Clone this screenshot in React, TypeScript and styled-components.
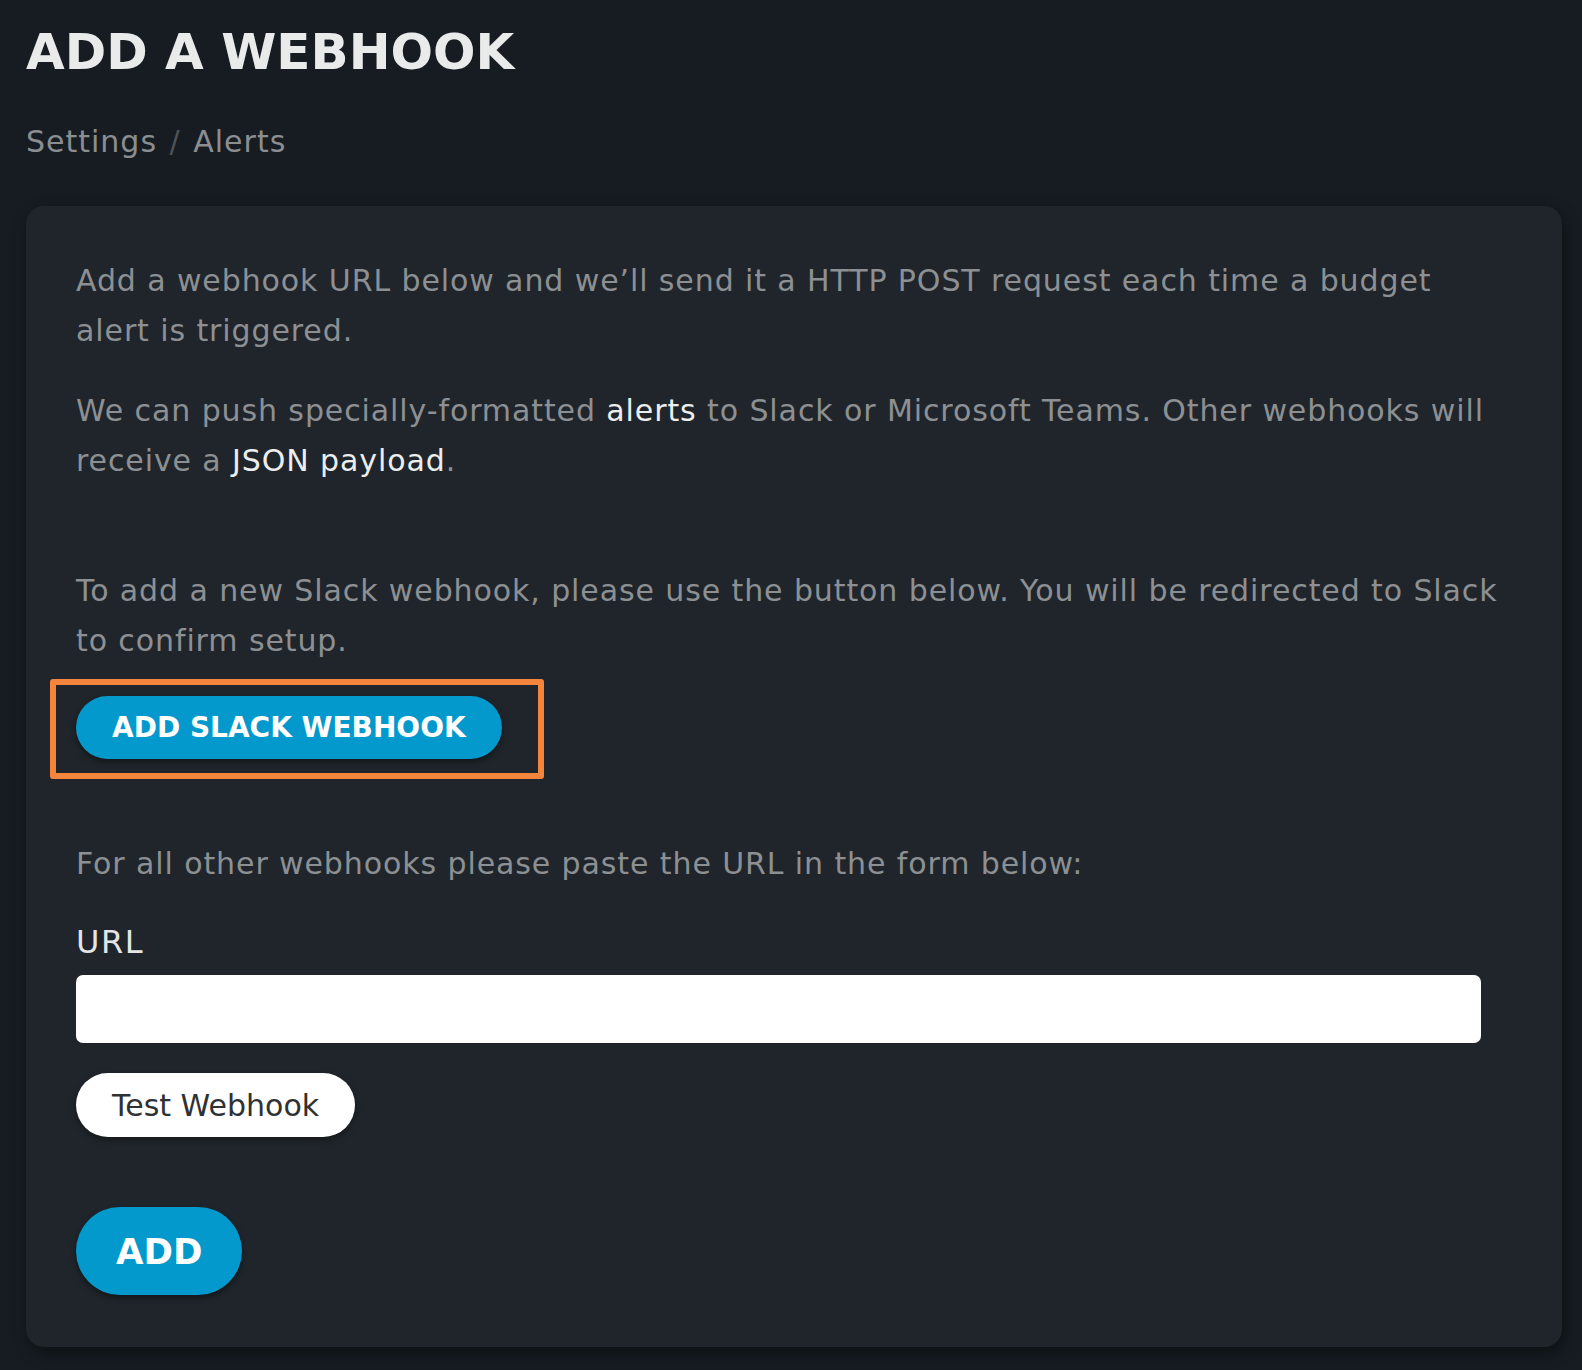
import React from "react";
import styled, { createGlobalStyle } from "styled-components";

const GlobalStyle = createGlobalStyle`
  html, body {
    margin: 0;
    padding: 0;
    background: #161c22;
  }
  body {
    font-family: "DejaVu Sans", "Liberation Sans", sans-serif;
    -webkit-font-smoothing: antialiased;
  }
  * { box-sizing: border-box; }
`;

const Page = styled.div`
  padding: 16px 20px 24px 26px;
  min-height: 1370px;
  background: #161c22;
`;

const Title = styled.h1`
  margin: 0;
  font-size: 50px;
  line-height: 72px;
  font-weight: 700;
  color: #e9ebea;
  letter-spacing: 0;
`;

const Breadcrumb = styled.nav`
  margin-top: 34px;
  font-size: 30px;
  line-height: 40px;
  color: #8b8e91;
  letter-spacing: 1px;
`;

const Separator = styled.span`
  color: #4e5358;
  margin: 0 2px;
`;

const Card = styled.section`
  margin-top: 44px;
  background: #1f252b;
  border-radius: 18px;
  padding: 50px 50px 52px;
  box-shadow: 3px 6px 16px rgba(0, 0, 0, 0.4);
`;

const Paragraph = styled.p<{ $gap?: number }>`
  margin: ${(p) => p.$gap ?? 30}px 0 0;
  max-width: 1424px;
  &:first-child { margin-top: 0; }
  font-size: 30px;
  line-height: 50px;
  color: #8d9093;
  letter-spacing: 0.9px;
`;

const Emph = styled.span`
  color: #eceeee;
`;

const Annotated = styled.div`
  position: relative;
  display: inline-block;
  margin-top: 30px;
  &::after {
    content: "";
    position: absolute;
    top: -17px;
    left: -26px;
    right: -42px;
    bottom: -20px;
    border: 6px solid #f5843c;
    border-radius: 3px;
    pointer-events: none;
  }
`;

const PrimaryButton = styled.button<{ $big?: boolean }>`
  display: block;
  border: none;
  cursor: pointer;
  background: #0399cc;
  color: #ffffff;
  font-family: inherit;
  font-weight: 700;
  text-transform: uppercase;
  font-size: ${(p) => (p.$big ? 35.5 : 28)}px;
  letter-spacing: 0;
  height: ${(p) => (p.$big ? 88 : 63)}px;
  padding: 0 ${(p) => (p.$big ? 40 : 36)}px;
  border-radius: 44px;
  box-shadow: 0 3px 6px rgba(0, 0, 0, 0.4);
  margin-top: ${(p) => (p.$big ? 70 : 0)}px;
`;

const FormBlock = styled.div`
  margin-top: 80px;
`;

const Label = styled.label`
  display: block;
  margin-top: 28px;
  font-size: 32px;
  line-height: 50px;
  color: #e4e6e6;
  letter-spacing: 1.5px;
`;

const Input = styled.input`
  display: block;
  margin-top: 8px;
  width: 100%;
  max-width: 1405px;
  height: 68px;
  border: none;
  border-radius: 7px;
  background: #ffffff;
  padding: 0 20px;
  font-size: 28px;
  font-family: inherit;
  outline: none;
`;

const SecondaryButton = styled.button`
  display: block;
  margin-top: 30px;
  height: 64px;
  padding: 0 36px;
  border: none;
  border-radius: 32px;
  background: #ffffff;
  color: #2f3235;
  font-family: inherit;
  font-size: 30px;
  letter-spacing: 0;
  cursor: pointer;
  box-shadow: 0 3px 6px rgba(0, 0, 0, 0.35);
`;

export default function App() {
  return (
    <>
      <GlobalStyle />
      <Page>
        <Title>ADD A WEBHOOK</Title>
        <Breadcrumb>
          Settings <Separator>/</Separator> Alerts
        </Breadcrumb>
        <Card>
          <Paragraph>
            Add a webhook URL below and we’ll send it a HTTP POST request each time a budget
            alert is triggered.
          </Paragraph>
          <Paragraph>
            We can push specially-formatted <Emph>alerts</Emph> to Slack or Microsoft Teams. Other
            webhooks will receive a <Emph>JSON payload</Emph>.
          </Paragraph>
          <Paragraph $gap={80}>
            To add a new Slack webhook, please use the button below. You will be redirected to
            Slack to confirm setup.
          </Paragraph>
          <Annotated>
            <PrimaryButton>Add Slack Webhook</PrimaryButton>
          </Annotated>
          <FormBlock>
            <Paragraph>For all other webhooks please paste the URL in the form below:</Paragraph>
            <Label htmlFor="webhook-url">URL</Label>
            <Input id="webhook-url" type="text" />
            <SecondaryButton>Test Webhook</SecondaryButton>
            <PrimaryButton $big>Add</PrimaryButton>
          </FormBlock>
        </Card>
      </Page>
    </>
  );
}
